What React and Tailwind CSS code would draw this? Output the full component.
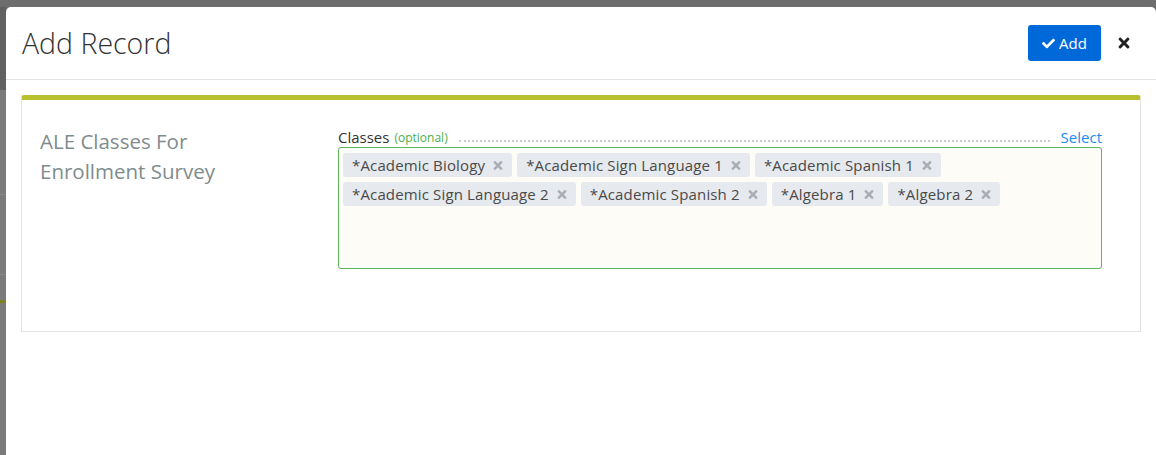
import { FaCheck, FaTimes } from "react-icons/fa";

const classes = [
  "*Academic Biology",
  "*Academic Sign Language 1",
  "*Academic Spanish 1",
  "*Academic Sign Language 2",
  "*Academic Spanish 2",
  "*Algebra 1",
  "*Algebra 2",
];

const Tag = ({ label }) => (
  <span className="h-[24px] flex items-center gap-[7px] pl-[9px] pr-[8px] rounded-[3px] bg-[#e6e9ed] text-[15px] tracking-[0.15px] text-[#4a4a4a] leading-none">
    {label}
    <FaTimes className="text-[#a9adb3] w-[12px] h-[13px]" />
  </span>
);

export default function App() {
  return (
    <div
      className="w-[1156px] h-[455px] overflow-hidden flex bg-[#6d6d6d]"
      style={{ fontFamily: '"Open Sans", "Liberation Sans", sans-serif' }}
    >
      {/* backdrop sliver */}
      <div className="w-[6px] shrink-0 flex flex-col pt-[7px]">
        <div className="h-[83px] bg-[#616161]" />
        <div className="flex-1 bg-[#7b7b7b] flex flex-col">
          <div className="h-[105px] border-b border-[#888]" />
          <div className="h-[80px] border-b border-[#888]" />
          <div className="h-[3px] mt-[25px] bg-[#7f8220]" />
          <div className="flex-1" />
        </div>
      </div>

      {/* modal */}
      <div className="flex-1 mt-[7px] bg-white rounded-t-[5px] flex flex-col">
        <div className="h-[73px] shrink-0 border-b border-[#e3e3e3] flex items-center pl-[16px] pr-[25px]">
          <h1 className="text-[28.5px] font-light text-[#333] leading-none">Add Record</h1>
          <div className="ml-auto flex items-center gap-[16px]">
            <button className="h-[36px] w-[73px] rounded-[3px] bg-[#0069d9] text-white text-[15px] flex items-center justify-center gap-[4px]">
              <FaCheck className="w-[13px] h-[13px]" />
              Add
            </button>
            <FaTimes className="w-[14px] h-[16px] text-[#222]" />
          </div>
        </div>

        <div className="p-[15px]">
          <div className="h-[237px] border border-[#e3e3e3] border-t-[5px] border-t-[#b8c12d] rounded-t-[3px] flex pl-[18px] pr-[38px] pt-[26px]">
            <div className="w-[298px] shrink-0 text-[20.5px] leading-[30px] text-[#7f8c8d]">
              ALE Classes For
              <br />
              Enrollment Survey
            </div>
            <div className="flex-1 flex flex-col mt-[1px]">
              <div className="h-[20px] flex items-end">
                <span className="text-[15px] text-[#333] leading-[20px]">Classes</span>
                <span className="ml-[5px] text-[12px] text-[#4cae4c] leading-[18px]">(optional)</span>
                <div className="flex-1 mx-[11px] mb-[5px] border-b-2 border-dotted border-[#cdcdcd]" />
                <span className="text-[15px] text-[#1b8cf2] leading-[20px]">Select</span>
              </div>
              <div className="h-[122px] border border-[#5cb85c] rounded-[3px] bg-[#fdfcf7] pt-[5px] px-[4px] flex flex-wrap content-start gap-[5px]">
                {classes.map((c) => (
                  <Tag key={c} label={c} />
                ))}
              </div>
            </div>
          </div>
        </div>
      </div>
    </div>
  );
}
